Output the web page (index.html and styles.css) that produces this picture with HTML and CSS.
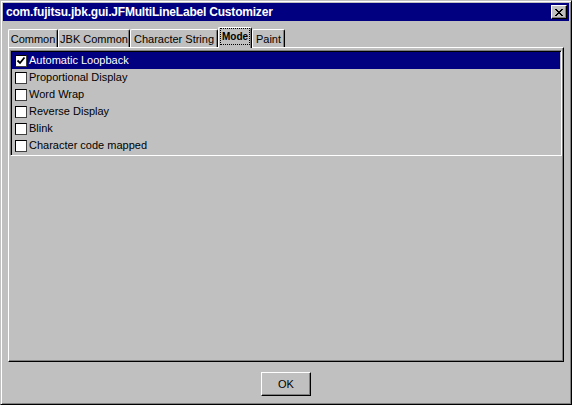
FILE: index.html
```html
<!DOCTYPE html>
<html lang="en">
<head>
    <meta charset="UTF-8">
    <title>com.fujitsu.jbk.gui.JFMultiLineLabel Customizer</title>
    <link rel="stylesheet" href="styles.css">
</head>
<body>
    <div class="window">
        <div class="titlebar">
            <span class="title">com.fujitsu.jbk.gui.JFMultiLineLabel Customizer</span>
            <button class="close-btn">
                <svg width="8" height="7" viewBox="0 0 8 7">
                    <path d="M0 0h2v1h1v1h2v-1h1v-1h2v1h-1v1h-1v1h-1v1h1v1h1v1h1v1h-2v-1h-1v-1h-2v1h-1v1h-2v-1h1v-1h1v-1h1v-1h-1v-1h-1v-1h-1z" fill="#000"/>
                </svg>
            </button>
        </div>

        <div class="content">
            <div class="tabs">
                <div class="tab tab-common">Common</div>
                <div class="tab tab-jbk">JBK Common</div>
                <div class="tab tab-string">Character String</div>
                <div class="tab tab-mode active"><span class="focus">Mode</span></div>
                <div class="tab tab-paint">Paint</div>
            </div>

            <div class="panel">
                <div class="list">
                    <div class="row selected">
                        <span class="check">
                            <svg width="10" height="10" viewBox="0 0 10 10">
                                <path d="M1.5 4.5 L4 7 L8.5 1.5" fill="none" stroke="#000" stroke-width="1.8"/>
                            </svg>
                        </span>
                        <span class="label">Automatic Loopback</span>
                    </div>
                    <div class="row"><span class="check"></span><span class="label">Proportional Display</span></div>
                    <div class="row"><span class="check"></span><span class="label">Word Wrap</span></div>
                    <div class="row"><span class="check"></span><span class="label">Reverse Display</span></div>
                    <div class="row"><span class="check"></span><span class="label">Blink</span></div>
                    <div class="row"><span class="check"></span><span class="label">Character code mapped</span></div>
                </div>
            </div>
        </div>

        <div class="footer">
            <button class="ok-btn">OK</button>
        </div>
    </div>
</body>
</html>
```

FILE: styles.css
```css
/* classic dialog look */
body {
    margin: 0;
    padding: 0;
    font-family: "Liberation Sans", Arial, sans-serif;
    font-size: 11px;
    color: #000;
    background-color: #c0c0c0;
}
.window {
    box-sizing: border-box;
    width: 572px;
    height: 405px;
    padding: 2px;
    display: flex;
    flex-direction: column;
    background-color: #c0c0c0;
    border: 1px solid;
    border-color: #c0c0c0 #000 #000 #c0c0c0;
    box-shadow: inset 1px 1px #fff, inset -1px -1px #808080;
}
.titlebar {
    height: 18px;
    display: flex;
    align-items: center;
    justify-content: space-between;
    padding: 0 2px 0 3px;
    background-color: #000080;
    color: #fff;
}
.title {
    font-weight: bold;
    font-size: 12px;
    letter-spacing: -0.2px;
}
.close-btn {
    box-sizing: border-box;
    width: 16px;
    height: 14px;
    padding: 0;
    margin: 0;
    display: flex;
    align-items: center;
    justify-content: center;
    background-color: #c0c0c0;
    border: 1px solid;
    border-color: #fff #000 #000 #fff;
    box-shadow: inset -1px -1px #808080;
}
.content {
    padding: 6px 5px 0 5px;
}
.tabs {
    height: 20px;
    display: flex;
    align-items: flex-end;
}
.tab {
    box-sizing: border-box;
    height: 18px;
    padding-top: 2px;
    line-height: 14px;
    text-align: center;
    white-space: nowrap;
    border: 1px solid;
    border-bottom: none;
    border-color: #fff #000 #fff #fff;
    border-radius: 2px 2px 0 0;
    box-shadow: inset -1px 0 #808080;
    background-color: #c0c0c0;
}
.tab-common { width: 50px; }
.tab-jbk { width: 72px; }
.tab-string { width: 88px; }
.tab-mode { width: 34px; }
.tab-paint { width: 33px; }
.tab.active {
    position: relative;
    z-index: 1;
    height: 21px;
    margin-bottom: -1px;
    padding: 0 1px;
}
.focus {
    display: block;
    padding-top: 1px;
    line-height: 14px;
    border: 1px dotted #000;
    font-weight: bold;
    font-size: 10px;
}
.panel {
    box-sizing: border-box;
    height: 315px;
    padding: 2px 1px 0 1px;
    border: 1px solid;
    border-color: #fff #000 #000 #fff;
    box-shadow: inset -1px -1px #808080;
}
.list {
    padding: 1px;
    border: 1px solid;
    border-color: #808080 #fff #fff #808080;
    box-shadow: inset 1px 1px #000, inset -1px -1px #c0c0c0;
}
.row {
    height: 17px;
    display: flex;
    align-items: flex-start;
    line-height: 17px;
}
.row.selected {
    background-color: #000080;
    color: #fff;
}
.check {
    box-sizing: border-box;
    width: 12px;
    height: 12px;
    margin: 3px 2px 0 3px;
    display: flex;
    align-items: center;
    justify-content: center;
    background-color: #fff;
    border: 1px solid;
    border-color: #000 #404040 #404040 #000;
}
.footer {
    flex: 1;
    display: flex;
    justify-content: center;
    align-items: flex-start;
    padding-top: 10px;
}
.ok-btn {
    box-sizing: border-box;
    width: 50px;
    height: 24px;
    padding: 0;
    font-family: "Liberation Sans", Arial, sans-serif;
    font-size: 11px;
    color: #000;
    background-color: #c0c0c0;
    border: 1px solid;
    border-color: #fff #000 #000 #fff;
    box-shadow: inset -1px -1px #808080;
}
```
